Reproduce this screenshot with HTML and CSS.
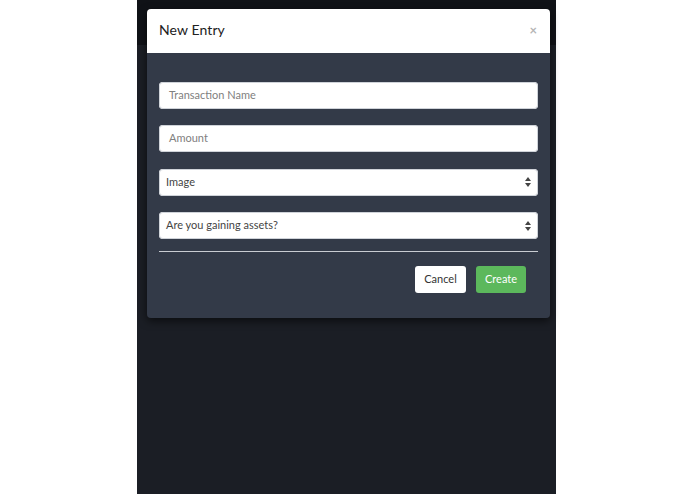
FILE: index.html
```html
<!DOCTYPE html>
<html>
<head>
<meta charset="utf-8">
<link rel="stylesheet" href="styles.css">
</head>
<body>
<div class="page">
  <div class="topbar"></div>
  <div class="modal">
    <div class="modal-header">
      <span class="title">New Entry</span>
      <span class="close">×</span>
    </div>
    <div class="modal-body">
      <div class="field"><span class="placeholder">Transaction Name</span></div>
      <div class="field"><span class="placeholder">Amount</span></div>
      <div class="field select"><span class="value">Image</span>
        <svg class="arrows" width="6" height="10" viewBox="0 0 6 10"><path d="M3 0L6 4H0Z M3 10L6 6H0Z" fill="#444"/></svg>
      </div>
      <div class="field select"><span class="value">Are you gaining assets?</span>
        <svg class="arrows" width="6" height="10" viewBox="0 0 6 10"><path d="M3 0L6 4H0Z M3 10L6 6H0Z" fill="#444"/></svg>
      </div>
      <div class="divider"></div>
      <div class="actions">
        <span class="btn btn-cancel">Cancel</span>
        <span class="btn btn-create">Create</span>
      </div>
    </div>
  </div>
</div>
</body>
</html>
```
FILE: styles.css
```css
html, body {
  margin: 0;
  padding: 0;
  background: #ffffff;
  font-family: "Lato", "Noto Sans", sans-serif;
}
.page {
  position: relative;
  width: 419px;
  height: 494px;
  margin: 0 0 0 137px;
  background: #1b1e25;
}
.topbar {
  height: 45px;
  background: #101217;
}
.modal {
  position: absolute;
  top: 9px;
  left: 10px;
  width: 403px;
  border-radius: 4px;
  box-shadow: 0 3px 8px rgba(0,0,0,0.6);
  overflow: hidden;
}
.modal-header {
  height: 44px;
  box-sizing: border-box;
  background: #ffffff;
  display: flex;
  align-items: center;
  justify-content: space-between;
  padding: 0 13px 3px 12px;
}
.title {
  font-size: 14px;
  color: #222;
  letter-spacing: 0.1px;
}
.close {
  font-size: 13px;
  color: #b5b5b5;
  font-weight: bold;
}
.modal-body {
  background: #333a48;
  padding: 29px 12px 25px;
  display: flex;
  flex-direction: column;
}
.field {
  height: 27px;
  box-sizing: border-box;
  background: #ffffff;
  border-radius: 4px;
  margin-bottom: 16.4px;
  display: flex;
  align-items: center;
  justify-content: space-between;
  padding: 0 7px 2px 10px;
  font-size: 11px;
  box-shadow: inset 0 0 0 1px #cfd3d9;
}
.field:nth-child(4) { margin-bottom: 0; }
.field.select { padding-left: 7px; }
.placeholder { color: #808080; }
.value { color: #444; }
.arrows { display: block; margin-top: 2px; }
.divider {
  height: 1px;
  background: #c9ccd2;
  margin: 12px 0 14px;
}
.actions {
  display: flex;
  justify-content: flex-end;
  gap: 10px;
  padding-right: 12px;
}
.btn {
  height: 27px;
  box-sizing: border-box;
  padding-bottom: 2px;
  border-radius: 3px;
  display: flex;
  align-items: center;
  justify-content: center;
  font-size: 11px;
}
.btn-cancel {
  width: 51px;
  background: #ffffff;
  color: #333;
}
.btn-create {
  width: 50px;
  background: #5cb85c;
  color: #ffffff;
}
```
